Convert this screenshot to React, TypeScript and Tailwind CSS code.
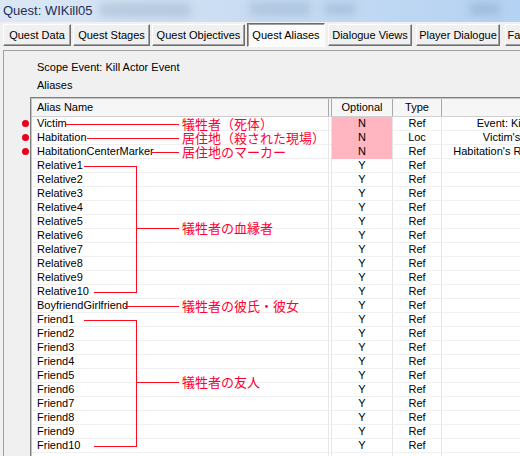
import React from 'react';

type Row = { name: string; opt: string; type: string; fill?: string; dot?: boolean };

const rows: Row[] = [
  { name: 'Victim', opt: 'N', type: 'Ref', fill: 'Event: Kill Actor Event', dot: true },
  { name: 'Habitation', opt: 'N', type: 'Loc', fill: "Victim's Location Ref", dot: true },
  { name: 'HabitationCenterMarker', opt: 'N', type: 'Ref', fill: "Habitation's Ref: Center 01", dot: true },
  ...Array.from({ length: 10 }, (_, i) => ({ name: `Relative${i + 1}`, opt: 'Y', type: 'Ref' })),
  { name: 'BoyfriendGirlfriend', opt: 'Y', type: 'Ref' },
  ...Array.from({ length: 10 }, (_, i) => ({ name: `Friend${i + 1}`, opt: 'Y', type: 'Ref' })),
  { name: '', opt: '', type: '' },
];

const tabs = [
  { label: 'Quest Data', w: 'w-[68px]', ml: 'ml-0' },
  { label: 'Quest Stages', w: 'w-[77px]', ml: 'ml-[2px]' },
  { label: 'Quest Objectives', w: 'w-[93px]', ml: 'ml-[2px]' },
  { label: 'Quest Aliases', w: 'w-[78px]', ml: 'ml-[2px]', active: true },
  { label: 'Dialogue Views', w: 'w-[84px]', ml: 'ml-[3px]' },
  { label: 'Player Dialogue', w: 'w-[84px]', ml: 'ml-[4px]' },
  { label: 'Faction Relations', w: 'w-[90px]', ml: 'ml-[5px]' },
];

function Label({ y, text }: { y: number; text: string }) {
  return (
    <span
      className="absolute left-[182px] whitespace-nowrap font-['Noto_Sans_CJK_JP',sans-serif] text-[13px] leading-[14px] text-[#ff0030]"
      style={{ top: y - 7 }}
    >
      {text}
    </span>
  );
}

export default function App() {
  const lines: [number, number, number, number][] = [
    [66, 124, 178, 124],
    [87, 138, 178, 138],
    [151, 152, 178, 152],
    [84, 166, 136, 166],
    [94, 292, 136, 292],
    [136, 166, 136, 292],
    [136, 228, 178, 228],
    [125, 306, 178, 306],
    [84, 320, 136, 320],
    [94, 446, 136, 446],
    [136, 320, 136, 446],
    [136, 382, 178, 382],
  ];
  return (
    <div className="w-[520px] h-[456px] overflow-hidden relative bg-[#f0f0f0] text-[11px] text-black font-['Liberation_Sans',Arial,sans-serif]">
      {/* title bar */}
      <div className="h-[22px] relative overflow-hidden bg-linear-to-r from-[#dbe7f5] via-[#c8dcf2] to-[#b4d2f3] flex items-center pl-[3px]">
        <span className="absolute left-[100px] top-[3px] w-[90px] h-[14px] bg-[#8fa6c4]/40 blur-[4px]" />
        <span className="absolute left-[250px] top-[2px] w-[60px] h-[14px] bg-[#8ea8c8]/40 blur-[4px]" />
        <span className="absolute left-[325px] top-[4px] w-[30px] h-[10px] bg-[#7f9bbf]/40 blur-[4px]" />
        <span className="absolute left-[470px] top-[3px] w-[30px] h-[12px] bg-[#7f9bbf]/40 blur-[4px]" />
        <span className="relative text-[13px] text-[#1b2f57]">Quest: WIKill05</span>
      </div>

      {/* tab row */}
      <div className="h-[28px] flex items-start pl-[3px] whitespace-nowrap">
        {tabs.map((t) =>
          t.active ? (
            <div
              key={t.label}
              className={`${t.w} ${t.ml} shrink-0 h-[24px] mt-[1px] flex items-center justify-center bg-[#fbfbfb] border border-t-[#6d6d6d] border-l-[#6d6d6d] border-r-white border-b-white shadow-[inset_1px_1px_0_#a0a0a0]`}
            >
              {t.label}
            </div>
          ) : (
            <div
              key={t.label}
              className={`${t.w} ${t.ml} shrink-0 h-[22px] mt-[2px] flex items-center justify-center bg-[#f0f0f0] border border-t-white border-l-white border-r-[#6d6d6d] border-b-[#6d6d6d] shadow-[inset_-1px_-1px_0_#a0a0a0]`}
            >
              {t.label}
            </div>
          )
        )}
      </div>

      {/* panel */}
      <div className="ml-[3px] h-[406px] border-l border-t border-[#a0a0a0] flex flex-col">
        <div className="pl-[33px] mt-[9px] leading-[14px]">Scope Event: Kill Actor Event</div>
        <div className="pl-[33px] mt-[4px] leading-[14px]">Aliases</div>
        <div className="relative mt-[5px] ml-[26px] w-max border-t border-l border-[#7f7f7f]">
          <div className="border-t border-l border-[#c4c4c4]">
            {/* header */}
            <div className="flex h-[18px] bg-[#f6f6f6] border-b border-[#d0d0d0] leading-[17px]">
              <div className="w-[296px] shrink-0 pl-[5px]">Alias Name</div>
              <div className="w-[3px] shrink-0 border-l border-[#a8a8a8]" />
              <div className="w-[61px] shrink-0 border-l border-[#a8a8a8] text-center">Optional</div>
              <div className="w-[49px] shrink-0 border-l border-[#a8a8a8] text-center">Type</div>
              <div className="w-[148px] shrink-0 border-l border-[#a8a8a8]" />
            </div>
            {/* body */}
            <div className="bg-white">
              {rows.map((r, i) => (
                <div key={i} className="flex h-[14px] leading-[13px] relative">
                  {r.dot && (
                    <span className="absolute left-[-10px] top-[3px] w-[7px] h-[7px] rounded-full bg-[#e8001c]" />
                  )}
                  <div className="w-[296px] shrink-0 pl-[5px] border-b border-[#f0f0f0] bg-white">{r.name}</div>
                  <div className="w-[3px] shrink-0 border-l border-b border-l-[#e6e6e6] border-b-[#f0f0f0]" />
                  <div
                    className={`w-[61px] shrink-0 border-l border-l-[#e6e6e6] border-b text-center ${
                      r.opt === 'N' ? 'bg-[#ffb6c1] border-b-[#ffb6c1]' : 'border-b-[#f0f0f0]'
                    }`}
                  >
                    {r.opt}
                  </div>
                  <div className="w-[49px] shrink-0 border-l border-b border-l-[#e6e6e6] border-b-[#f0f0f0] text-center">
                    {r.type}
                  </div>
                  <div className="w-[148px] shrink-0 border-l border-b border-l-[#e6e6e6] border-b-[#f0f0f0] text-right pr-[4px] whitespace-nowrap overflow-hidden">
                    {r.fill ?? ''}
                  </div>
                </div>
              ))}
            </div>
          </div>
        </div>
      </div>

      {/* annotations overlay */}
      <svg className="absolute left-0 top-0 pointer-events-none" width={520} height={456}>
        {lines.map(([x1, y1, x2, y2], i) => (
          <line
            key={i}
            x1={x1 === x2 ? x1 + 0.5 : x1}
            y1={y1 === y2 ? y1 + 0.5 : y1}
            x2={x1 === x2 ? x2 + 0.5 : x2 + 1}
            y2={y1 === y2 ? y2 + 0.5 : y2 + 1}
            stroke="#ff0a1e"
            strokeWidth={1}
            shapeRendering="crispEdges"
          />
        ))}
      </svg>
      <div className="absolute inset-0 pointer-events-none">
        <Label y={124} text="犠牲者（死体）" />
        <Label y={138} text="居住地（殺された現場）" />
        <Label y={152} text="居住地のマーカー" />
        <Label y={228} text="犠牲者の血縁者" />
        <Label y={306} text="犠牲者の彼氏・彼女" />
        <Label y={382} text="犠牲者の友人" />
      </div>
    </div>
  );
}
